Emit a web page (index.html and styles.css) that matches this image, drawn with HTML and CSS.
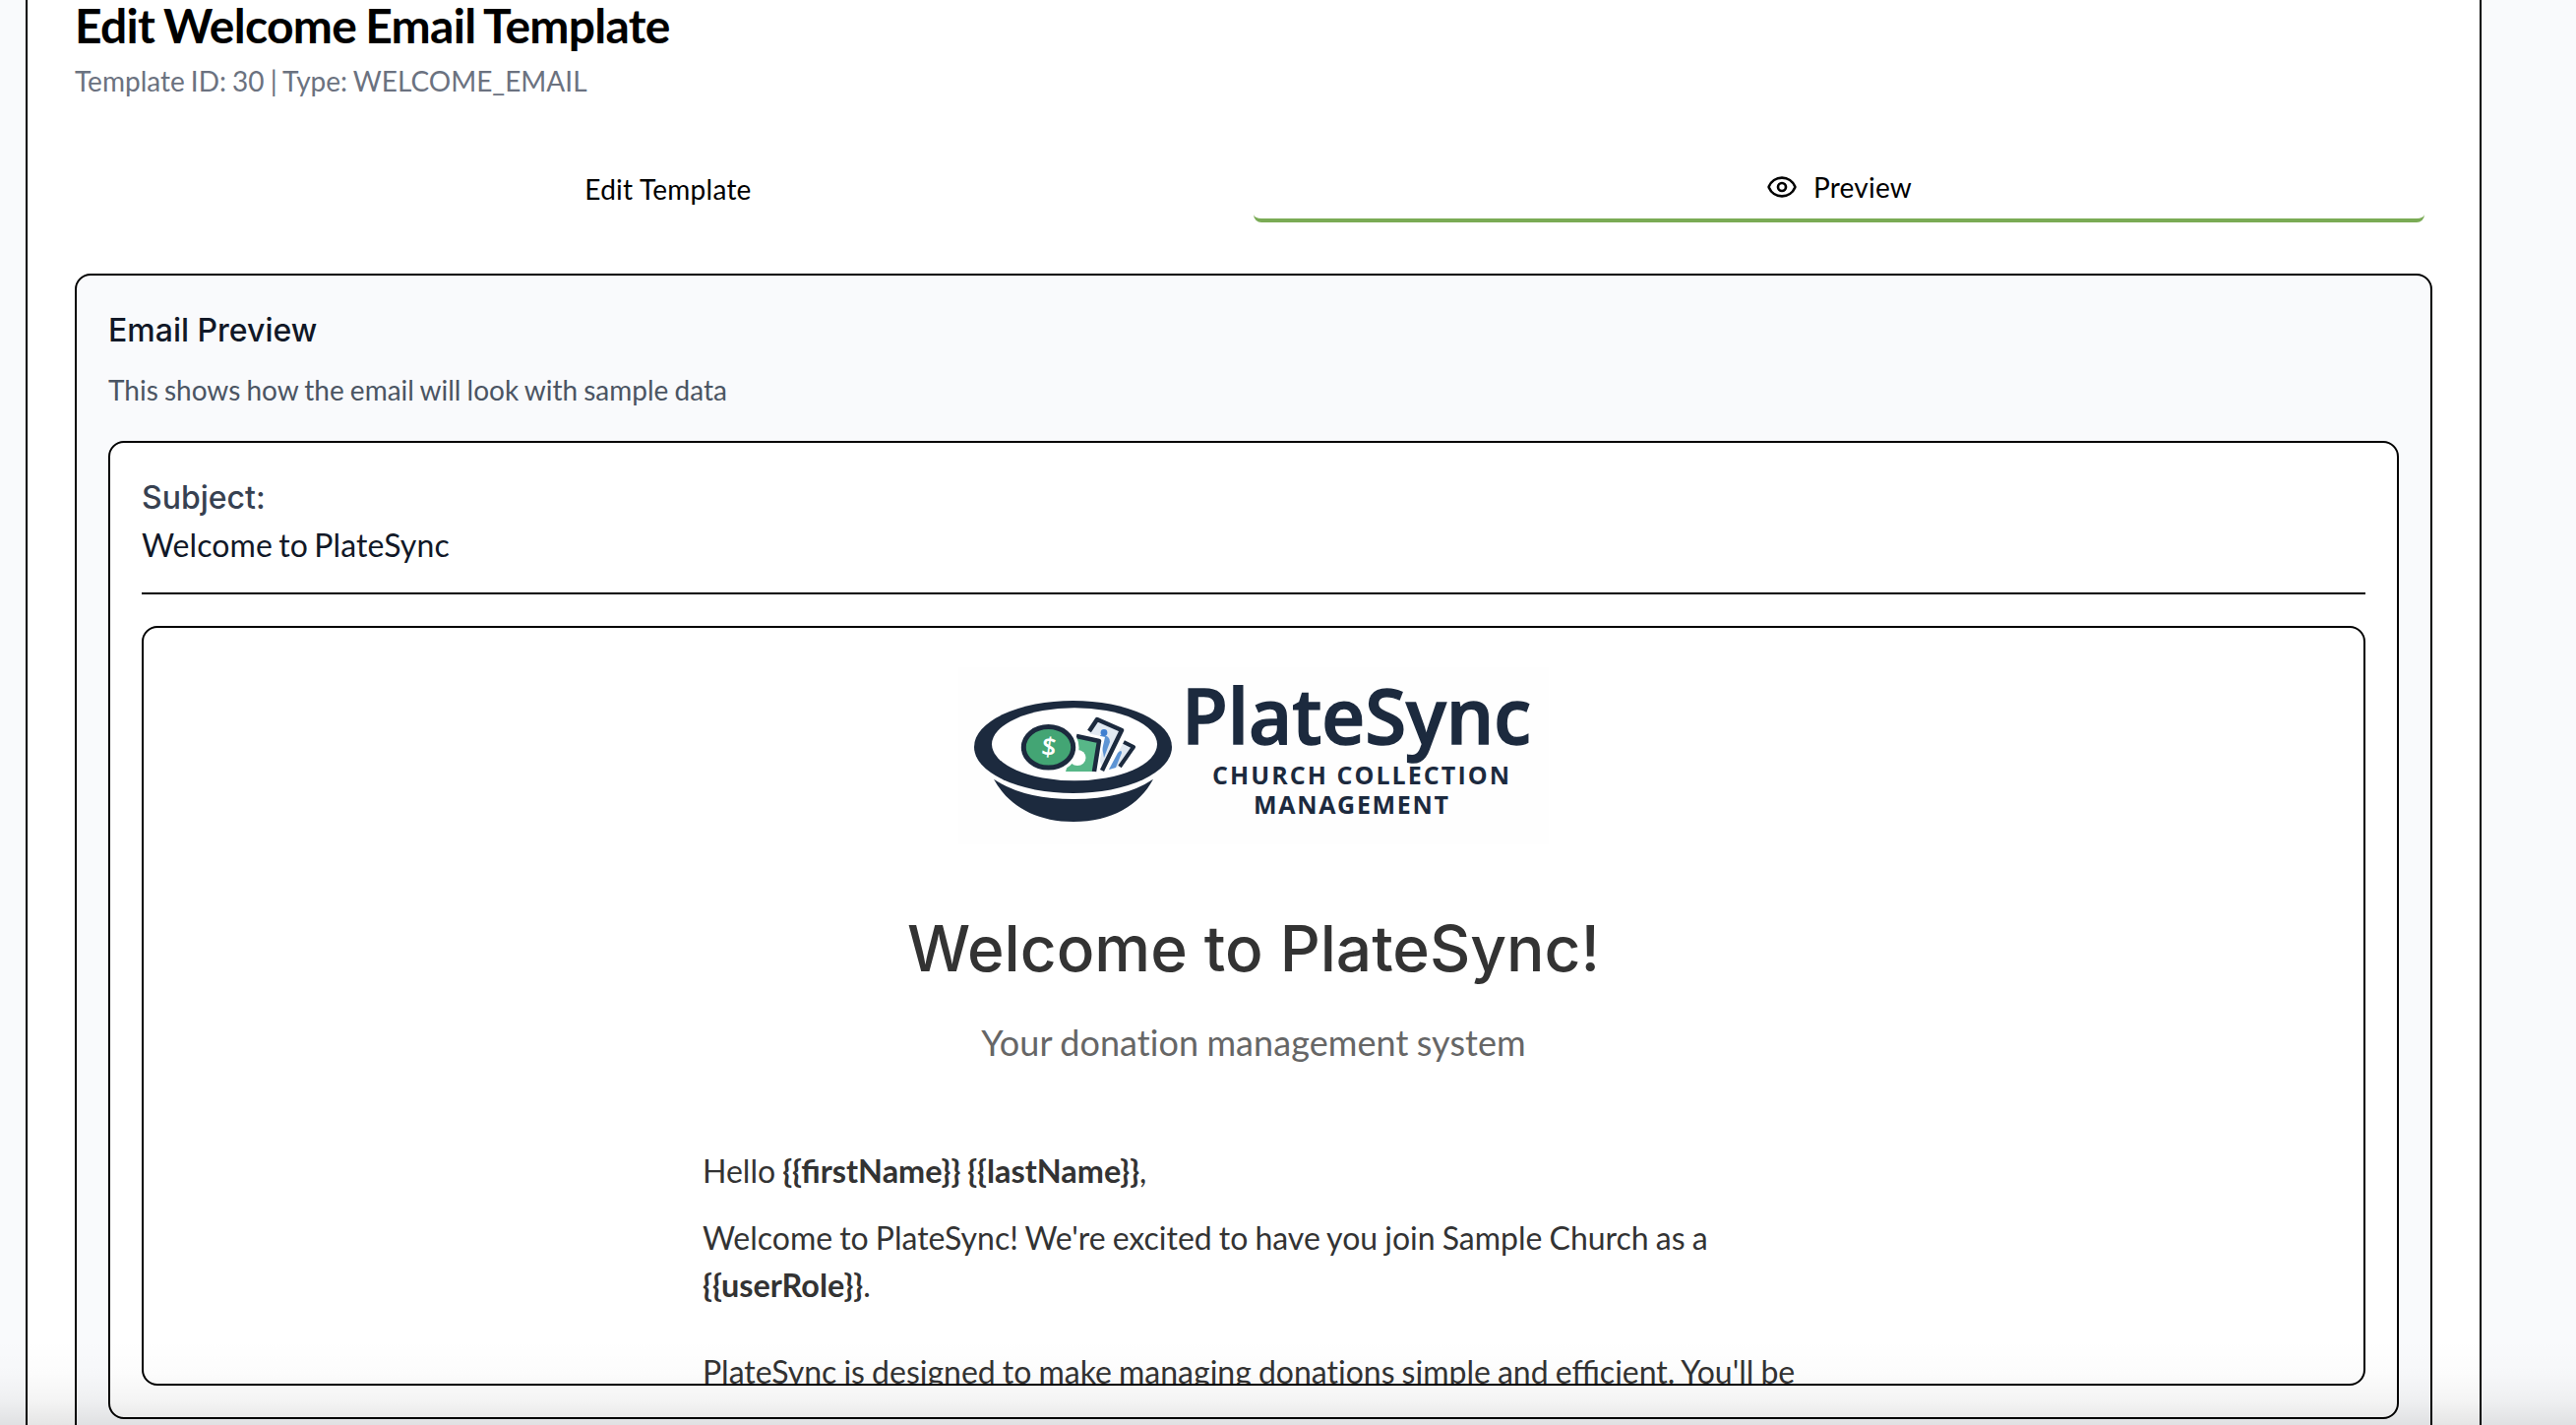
FILE: index.html
```html
<!DOCTYPE html>
<html lang="en">
<head>
<meta charset="utf-8">
<title>Edit Welcome Email Template</title>
<link rel="stylesheet" href="styles.css">
</head>
<body>
<main class="card">
  <h1 class="title">Edit Welcome Email Template</h1>
  <p class="subtitle">Template ID: 30 | Type: WELCOME_EMAIL</p>
  <div class="tabs" role="tablist">
    <button class="tab" role="tab">Edit Template</button>
    <button class="tab tab-active" role="tab">
      <svg class="eye" viewBox="0 0 24 24" fill="none" stroke="currentColor" stroke-width="2" stroke-linecap="round" stroke-linejoin="round"><path d="M2.062 12.348a1 1 0 0 1 0-.696 10.75 10.75 0 0 1 19.876 0 1 1 0 0 1 0 .696 10.75 10.75 0 0 1-19.876 0"/><circle cx="12" cy="12" r="3"/></svg>
      <span>Preview</span>
    </button>
  </div>
  <section class="panel">
    <h2 class="panel-title">Email Preview</h2>
    <p class="panel-note">This shows how the email will look with sample data</p>
    <div class="message">
      <div class="subject">
        <h3 class="subject-label">Subject:</h3>
        <p class="subject-text">Welcome to PlateSync</p>
      </div>
      <div class="frame">
        <div class="email">
          <svg class="logo" viewBox="0 0 600 180">
            <rect width="600" height="180" fill="#fefefe"/>
            <path d="M36 113.7Q66 134 117 134Q168 134 198 113.7C184 140 156 157 117 157C78 157 50 140 36 113.7Z" fill="#1c2a3e"/>
            <ellipse cx="116.5" cy="81" rx="100.5" ry="47" fill="#1c2a3e"/>
            <ellipse cx="118" cy="78.3" rx="84" ry="37" fill="#fff"/>
            <path d="M168 76L178 81L164 101L153 104Z" fill="#e1e9f2"/>
            <path d="M168 76L178 81L164 101" fill="none" stroke="#1c2a3e" stroke-width="4" stroke-linejoin="round"/>
            <path d="M153 104L162 87Q166 83 166 87L160 102Z" fill="#5d94d4"/>
            <path d="M133 65L141 53L166 64L147 104Z" fill="#e1e9f2"/>
            <path d="M144 69Q154 68 154 76L148 92Z" fill="#5d94d4"/>
            <circle cx="148" cy="66.5" r="3.4" fill="#3f7fd0"/>
            <path d="M133 65L141 53L166 64L146 105" fill="none" stroke="#1c2a3e" stroke-width="4.5" stroke-linejoin="round"/>
            <path d="M118 64L149 71L141 107H106Z" fill="#fff"/>
            <path d="M120 70L142 75L137 106H109Z" fill="#57b788"/>
            <ellipse cx="121" cy="92" rx="8.5" ry="8" fill="#fff"/>
            <path d="M120 70L143 75L138 106" fill="none" stroke="#1c2a3e" stroke-width="4.5" stroke-linejoin="round"/>
            <ellipse cx="91.5" cy="81.3" rx="31" ry="26.5" fill="#fff"/>
            <ellipse cx="91.5" cy="81.3" rx="25.2" ry="20.8" fill="#43a574" stroke="#1c2a3e" stroke-width="5"/>
            <text class="logo-dollar" x="92" y="90" transform="rotate(8 92 81)">$</text>
            <text class="logo-name" x="227" y="78" textLength="355" lengthAdjust="spacingAndGlyphs">PlateSync</text>
            <text class="logo-tag" x="258" y="119" textLength="302">CHURCH COLLECTION</text>
            <text class="logo-tag" x="300" y="149" textLength="198">MANAGEMENT</text>
          </svg>
          <h1 class="email-title">Welcome to PlateSync!</h1>
          <p class="email-tagline">Your donation management system</p>
          <p class="email-text">Hello <strong>{{firstName}} {{lastName}}</strong>,</p>
          <p class="email-text email-intro">Welcome to PlateSync! We're excited to have you join Sample Church as a <strong>{{userRole}}</strong>.</p>
          <p class="email-text email-more">PlateSync is designed to make managing <span class="plain">donations</span> simple and efficient. You'll be</p>
        </div>
      </div>
    </div>
  </section>
</main>
<div class="bottom-shade"></div>
</body>
</html>
```
FILE: styles.css
```css
* { box-sizing: border-box; margin: 0; }
html, body { height: 1448px; overflow: hidden; }
body {
  padding: 0 96px 0 26px;
  background: #f9fafc;
  color: #000;
  font: 28px/40px Lato, "Liberation Sans", sans-serif;
  word-spacing: -0.037em;
}
.card {
  height: 1448px;
  padding: 1px 48px 0;
  overflow: hidden;
  border: solid #000;
  border-width: 0 2px;
  background: #fff;
}
.title { padding-top: 1px; font-size: 48px; line-height: 48px; font-weight: 700; letter-spacing: -0.72px; word-spacing: -1.8px; }
.subtitle { margin-top: 12px; color: #6b7280; }
.tabs { display: grid; grid-template-columns: 1fr 1fr; margin-top: 56px; padding: 0 8px; }
.tab {
  display: flex;
  align-items: center;
  justify-content: center;
  gap: 16px;
  height: 68px;
  padding: 0;
  border: 0;
  background: none;
  color: #000;
  font: inherit;
  letter-spacing: 0.25px;
}
.tab-active { border-bottom: 4px solid #7aab55; border-radius: 8px; }
.eye { width: 32px; height: 32px; }
.panel {
  height: 1300px;
  margin-top: 52px;
  padding: 32px;
  border: 2px solid #000;
  border-radius: 16px;
  background: #f9fafc;
}
.panel-title, .subject-label { font: 500 32px/48px Inter, sans-serif; word-spacing: 0; color: #111827; }
.panel-note { margin: 16px 0 32px; color: #4b5563; }
.message {
  padding: 32px;
  border: 2px solid #000;
  border-radius: 16px;
  background: #fff;
}
.subject { padding-bottom: 24px; border-bottom: 2px solid #000; }
.subject-label { color: #374151; }
.subject-text { font-size: 32px; line-height: 48px; letter-spacing: 0.12px; word-spacing: -2px; color: #111827; }
.frame {
  height: 772px;
  margin-top: 32px;
  overflow: hidden;
  border: 2px solid #000;
  border-radius: 16px;
}
.email { width: 1200px; margin: 0 auto; padding: 40px; color: #333; }
.logo { display: block; width: 600px; height: 180px; margin: 0 auto; word-spacing: 0; }
.logo-name { font: 600 77px "Open Sans", sans-serif; fill: #1c2a3e; stroke: #1c2a3e; stroke-width: 1.5px; }
.logo-tag { font: 700 25px "Open Sans", sans-serif; fill: #1c2a3e; }
.logo-dollar { font: 600 26px "Open Sans", sans-serif; fill: #fff; text-anchor: middle; }
.email-title { margin-top: 67px; font: 500 64px/77px Inter, sans-serif; word-spacing: 0; text-align: center; }
.email-tagline {
  margin: 30px 0 80px;
  font-size: 36px;
  line-height: 54px;
  font-variant-ligatures: none;
  letter-spacing: 0.08px;
  color: #666;
  text-align: center;
}
.email-text { font-size: 32px; line-height: 48px; word-spacing: -1.1px; }
.email-text strong { font-size: 32.4px; line-height: 1; }
.email-intro { margin-top: 20px; }
.email-more { margin-top: 40px; }
.plain { font-variant-ligatures: none; }
.bottom-shade {
  position: absolute;
  inset: auto 0 0;
  height: 88px;
  background: linear-gradient(rgba(0,0,0,0), rgba(0,0,0,.012) 40%, rgba(0,0,0,.045) 72%, rgba(0,0,0,.1));
}
```
